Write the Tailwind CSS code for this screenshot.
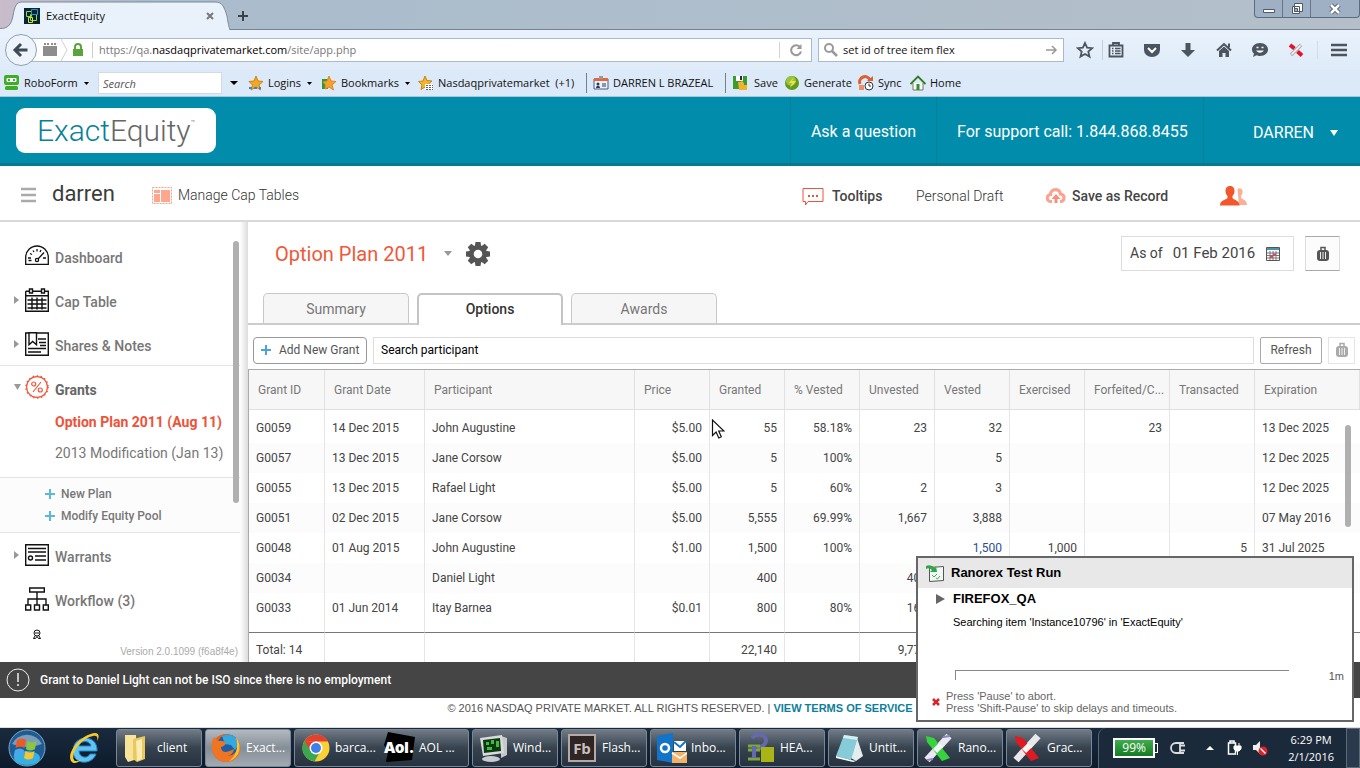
<!DOCTYPE html>
<html lang="en">
<head>
<meta charset="utf-8">
<title>ExactEquity</title>
<script src="https://cdn.jsdelivr.net/npm/@tailwindcss/browser@4"></script>
</head>
<body class="relative flex min-h-screen flex-col overflow-x-hidden bg-white font-['Roboto',sans-serif] text-[13px] text-[#555]">

<!-- Browser chrome -->
<div class="font-['Open_Sans',sans-serif] text-[11px] text-[#111]">
  <div class="flex h-[30px] items-start border-b border-[#76838f] bg-linear-to-r from-[#c9bccb] via-[#a9bccd] via-10% to-[#b4bfc9]">
    <div class="relative z-10 h-[30px] w-[230px]">
      <svg class="absolute inset-0 h-[30px] w-[230px]" viewBox="0 0 230 30"><path d="M0 30V28.500C8 28.500 11 25 13 16C14.500 7 16 2 22 2H215C222 2 224 6 227 16C228 24 229 28 230 30Z" fill="#e9f1fb"/><path d="M0 28.500C8 28.500 11 25 13 16C14.500 7 16 2 22 2H215C222 2 224 6 227 16C228 23 229 27 230 30" fill="none" stroke="#7e8a96"/></svg>
      <div class="relative flex h-[30px] items-center gap-1.5 pr-3 pl-6 pt-0.5">
        <svg class="size-4" viewBox="0 0 16 16"><path fill="#06243a" d="M0 0h16v16H0z"/><path d="M2.500 3.500h5v5h-5zM6.500 6.500h6v6h-6z" fill="none" stroke="#a5d62a"/><path d="M7.500 1.500h6v5h-6z" fill="none" stroke="#2f93b8"/><path d="M4.500 9.500h4v5h-4z" fill="none" stroke="#d8e82a"/></svg>
        <span class="flex-1 text-[11px]">ExactEquity</span>
        <button aria-label="Close tab"><svg class="size-4" viewBox="0 0 16 16"><path d="M5 5l6 6M11 5l-6 6" stroke="#777" stroke-width="2"/></svg></button>
      </div>
    </div>
    <button class="mt-1.5 ml-1 size-5" aria-label="New tab"><svg viewBox="0 0 20 20"><path d="M9 5v10M4 10h10" stroke="#38424c" stroke-width="2"/></svg></button>
    <div class="ml-auto flex h-[18px] divide-x divide-[#65758a] rounded-b border border-t-0 border-[#5c6c80] bg-[#9fb0c4]">
      <button class="w-7" aria-label="Minimize"><svg class="mx-auto h-4 w-4" viewBox="0 0 16 16"><path d="M2.500 8.500h11v3h-11z" fill="#fff" stroke="#4d5a6a"/></svg></button>
      <button class="w-7" aria-label="Restore"><svg class="mx-auto h-4 w-4" viewBox="0 0 16 16"><path d="M5.500 2.500h8v8h-8zM3.500 5.500h7v7h-7z" fill="#fff" stroke="#4d5a6a"/><path d="M5.500 7.500h3v3h-3z" fill="#9fb0c4" stroke="#4d5a6a"/></svg></button>
      <button class="w-12" aria-label="Close"><svg class="mx-auto h-4 w-4" viewBox="0 0 16 16"><path d="M4 4l8 8M12 4l-8 8" stroke="#4d5a6a" stroke-width="4.500"/><path d="M4 4l8 8M12 4l-8 8" stroke="#fff" stroke-width="2.500"/></svg></button>
    </div>
  </div>

  <div class="flex h-10 items-center bg-linear-to-b from-[#e9f2fc] to-[#dfebf9] pr-3 pl-[5px]">
    <button class="z-10 -mr-2 flex size-8 items-center justify-center rounded-full border border-[#8fa0b2] bg-[#eef4fb]" aria-label="Back"><svg class="size-5" viewBox="0 0 20 20"><path d="M10 4l-6 6 6 6M4 10h12.500" fill="none" stroke="#3f4a55" stroke-width="3"/></svg></button>
    <div class="flex h-6 flex-1 items-center border border-[#a9bacb] bg-white pl-3">
      <svg class="h-4 w-4" viewBox="0 0 16 16"><path fill="#8d8d8d" d="M1 4h14v10H1zM2 1h2v2H2zM5 1h2v2H5zM9 1h2v2H9zM12 1h2v2h-2z"/></svg>
      <svg class="ml-0.5 h-[22px] w-2" viewBox="0 0 8 22"><path d="M1 0l6 11-6 11" fill="none" stroke="#c9d1d9"/></svg>
      <svg class="ml-0.5 size-4" viewBox="0 0 16 16"><path fill="#58a53b" d="M3 7h10v7H3z"/><path d="M5 8V5a3 3 0 0 1 6 0v3" fill="none" stroke="#58a53b" stroke-width="2"/></svg>
      <span class="mx-1.5 h-4 border-l border-[#ccc]"></span>
      <span class="flex-1 text-[#777]">https://qa.<span class="text-black">nasdaqprivatemarket.com</span>/site/app.php</span>
      <button class="flex h-4 w-8 items-center justify-center border-l border-[#ccd5de]" aria-label="Reload"><svg class="size-4" viewBox="0 0 16 16"><path d="M12 5a5 5 0 1 0 1 4.500" fill="none" stroke="#999" stroke-width="2"/><path d="M13.500 2v5h-5z" fill="#999"/></svg></button>
    </div>
    <label class="ml-1.5 flex h-6 w-[246px] items-center border border-[#a9bacb] bg-white px-1">
      <svg class="mr-1 size-4" viewBox="0 0 16 16"><circle cx="6" cy="6" r="4" fill="none" stroke="#999" stroke-width="2"/><path d="M9 9l5 5" stroke="#999" stroke-width="2.500"/></svg>
      <input class="min-w-0 flex-1 outline-none" aria-label="Search" value="set id of tree item flex">
      <svg class="size-4" viewBox="0 0 16 16"><path d="M3 8h9M9 4l4 4-4 4" fill="none" stroke="#999" stroke-width="1.500"/></svg>
    </label>
    <div class="ml-3 flex items-center text-[#4a5560]">
      <button class="mr-2" aria-label="Bookmark"><svg class="size-[18px]" viewBox="0 0 18 18"><path d="M9 2l2.100 4.700 5.100.5-3.900 3.400 1.200 5L9 13l-4.500 2.600 1.200-5-3.900-3.400 5.100-.5z" fill="none" stroke="currentColor" stroke-width="1.800"/></svg></button>
      <span class="mr-1 h-5 border-l border-[#c3cfdb]"></span>
      <button class="mr-[18px]" aria-label="Reading list"><svg class="size-[18px]" viewBox="0 0 18 18"><path d="M2.500 4.500h13v11h-13zM6 4V2h6v2" fill="none" stroke="currentColor" stroke-width="1.800"/><path d="M5 7.500h1.500M8 7.500h5.500M5 10h1.500M8 10h5.500M5 12.500h1.500M8 12.500h5.500" stroke="currentColor" stroke-width="1.300"/></svg></button>
      <button class="mr-[18px]" aria-label="Pocket"><svg class="size-[18px]" viewBox="0 0 18 18"><path d="M1 3h16v6a8 7 0 0 1-16 0z" fill="currentColor"/><path d="M5 7l4 4 4-4" fill="none" stroke="#fff" stroke-width="2"/></svg></button>
      <button class="mr-[18px]" aria-label="Downloads"><svg class="size-[18px]" viewBox="0 0 18 18"><path d="M6.500 2h5v7H16l-7 7-7-7h4.500z" fill="currentColor"/></svg></button>
      <button class="mr-[18px]" aria-label="Home"><svg class="size-[18px]" viewBox="0 0 18 18"><path d="M2 9.500L9 3l7 6.500" fill="none" stroke="currentColor" stroke-width="2"/><path d="M4 10l5-4.500 5 4.500v6h-3.500v-4h-3v4H4zM13 2.500h2v4h-2z" fill="currentColor"/></svg></button>
      <button class="mr-[18px]" aria-label="Chat"><svg class="size-[18px]" viewBox="0 0 18 18"><path d="M9 2c5 0 8 3 8 6.500S14 15 9 15c-1.500 0-2.500 0-3.500-.7L2 16l1-3.500C1.500 11.500 1 10 1 8.500 1 5 4 2 9 2z" fill="currentColor"/><path d="M5 9.500q4 4.500 8 0z" fill="#fff"/><path d="M5.500 6.500h2M10.500 6.500h2" stroke="#fff" stroke-width="1.500"/></svg></button>
      <button class="mr-3" aria-label="Ranorex"><svg class="size-[18px]" viewBox="0 0 18 18"><path d="M14 4L4 14" stroke="#aaa" stroke-width="3.500"/><path d="M13.500 4.500l-9 9" stroke="#fff" stroke-width="1.500"/><path d="M3 4l4.500 3.500M10.500 10.500l4.500 4" stroke="#e2122b" stroke-width="4"/></svg></button>
      <button class="border-l border-[#d1dce8] pl-3" aria-label="Menu"><svg class="size-[18px]" viewBox="0 0 18 18"><path d="M1 4h16M1 9h16M1 14h16" stroke="currentColor" stroke-width="2.600"/></svg></button>
    </div>
  </div>

  <div class="flex h-[27px] items-center border-b border-[#a5c6da] bg-[#dce9f8] pl-1 whitespace-nowrap">
    <svg class="mr-1 size-4" viewBox="0 0 16 16"><rect x="0" y="0" width="15" height="10" rx="2" fill="#3fae24"/><rect x="2.500" y="3" width="10" height="4" rx="1" fill="#fff"/><path fill="#3fae24" d="M4 4h2v2H4zM9 4h2v2H9z"/><rect x="1" y="11" width="13" height="4" rx="1.500" fill="#3fae24"/></svg>
    <button class="flex w-[74px] items-center gap-1.5">RoboForm <svg class="h-[3px] w-[5px]" viewBox="0 0 5 3"><path d="M0 0h5L2.500 3z"/></svg></button>
    <input class="h-[22px] w-[124px] border border-[#d0dbe6] bg-white px-1 italic placeholder:text-[#555]" aria-label="RoboForm search" placeholder="Search">
    <button class="ml-2 w-[18px] text-left" aria-label="Search options"><svg class="h-2 w-2" viewBox="0 0 8 8"><path d="M0 2h8L4 6z"/></svg></button>
    <svg class="mr-1 size-4" viewBox="0 0 16 16"><path d="M8 1l2 5 5 .5-4 3.500 1.500 5L8 12l-5 3 1.500-5L1 6.500 6 6z" fill="#f5a623" stroke="#cf8412"/><path d="M1 13h12" stroke="#3d87c6" stroke-width="2" stroke-dasharray="3 2"/></svg>
    <button class="flex w-[53px] items-center gap-1.5">Logins <svg class="h-[3px] w-[5px]" viewBox="0 0 5 3"><path d="M0 0h5L2.500 3z"/></svg></button>
    <svg class="mr-1 size-4" viewBox="0 0 16 16"><path d="M1 4h6v10H1z" fill="#2d9a3b"/><path d="M8 1l2 5 5 .5-4 3.500 1.500 5L8 12l-4 2 .5-4L2 7l4-1z" fill="#f7a02b" stroke="#e08a1c"/></svg>
    <button class="flex w-[77px] items-center gap-1.5">Bookmarks <svg class="h-[3px] w-[5px]" viewBox="0 0 5 3"><path d="M0 0h5L2.500 3z"/></svg></button>
    <svg class="mr-1 size-4" viewBox="0 0 16 16"><path d="M7 1l2 4.500 5 .5-4 3.500 1.200 5L7 12l-4 2.500L4 10 0.500 6.500 5 6z" fill="#f5b32b" stroke="#c98416"/><path d="M7 9h8v6H7z" fill="#fff"/><path d="M8 10.500h7M8 12.500h7M8 14.500h7" stroke="#666" stroke-dasharray="2 1"/></svg>
    <button class="w-[148px] text-left">Nasdaqprivatemarket &nbsp;(+1)</button>
    <span class="mr-1.5 h-5 border-l border-[#73808d]"></span>
    <svg class="mr-1 size-4" viewBox="0 0 16 16"><path d="M1 4h14v10H1z" fill="#eef2f8" stroke="#4a5d80"/><path d="M1 3h14v3H1z" fill="#e2673d"/><path d="M6 1h4v3H6z" fill="#999"/><path d="M3 13c0-3 4-3 4 0z" fill="#223b66"/><circle cx="5" cy="9" r="1.500" fill="#223b66"/><path d="M9 9h4M9 11h4" stroke="#223b66"/></svg>
    <button class="w-[112px] text-left">DARREN L BRAZEAL</button>
    <span class="mr-1.5 h-5 border-l border-[#73808d]"></span>
    <svg class="mr-1.5 size-4" viewBox="0 0 16 16"><path d="M1 1h14v13H1z" fill="#3a9b2f"/><path d="M4 1h7v5H4z" fill="#fff"/><path d="M8 1h2v4H8z" fill="#234"/><path d="M6 7h3V5l3 3v2h3v5H7z" fill="#f0b12c"/></svg>
    <button class="w-[30px] text-left">Save</button>
    <svg class="mr-1 size-4" viewBox="0 0 16 16"><circle cx="8" cy="8" r="7" fill="#5d9a1d"/><circle cx="7" cy="6" r="5" fill="#99c443"/><path d="M10 2L5 8h3l-2 5 6-7H8z" fill="#ffe03a"/></svg>
    <button class="w-[54px] text-left">Generate</button>
    <svg class="mr-1 size-4" viewBox="0 0 16 16"><path d="M2 9a5 5 0 0 1 10-4" fill="none" stroke="#dd5f2d" stroke-width="3"/><path d="M9 6h6V1z" fill="#dd5f2d"/><path d="M1 10h5v5H1z" fill="#e98f6d"/><circle cx="11" cy="11" r="4" fill="#fff" stroke="#333"/><path d="M11 8.500V11h2" fill="none" stroke="#333"/></svg>
    <button class="w-8 text-left">Sync</button>
    <svg class="mr-1 size-4" viewBox="0 0 16 16"><path d="M3 8v7h10V8" fill="#f6fbef" stroke="#777"/><path d="M0.500 9L8 1.500 15.500 9" fill="none" stroke="#2f7a22" stroke-width="1.800"/><path d="M6.500 9h3v6h-3z" fill="#3c8a2c"/></svg>
    <button>Home</button>
  </div>
</div>

<!-- Product header -->
<header class="flex h-[69px] items-stretch border-b-3 border-[#08788f] bg-[#028cab] pl-4 text-[16px] text-white">
  <a href="#" class="mt-[11px] flex h-[45px] w-[200px] items-center justify-center rounded-[9px] bg-white text-[30px] font-light text-[#666]"><span class="text-[#058199]">Exact</span>Equity<sup class="-top-2 text-[7px]">™</sup></a>
  <nav class="ml-auto flex divide-x divide-[#057f9b] border-l border-[#057f9b]">
    <a href="#" class="flex w-[146px] items-center justify-center pt-1">Ask a question</a>
    <span class="flex w-[267px] items-center pt-1 pl-5">For support call: 1.844.868.8455</span>
    <button class="flex w-[156px] items-center justify-end gap-4 pt-1.5 pr-[22px]">DARREN <svg class="h-[6px] w-2" viewBox="0 0 8 6"><path d="M0 0h8L4 6z" fill="#fff"/></svg></button>
  </nav>
</header>

<div class="flex h-14 items-center border-b-2 border-[#d9d9d9] pl-5 text-[14px] text-[#555]">
  <button class="mt-1" aria-label="Menu"><svg class="h-4 w-4" viewBox="0 0 16 16"><path d="M1 2h15M1 8h15M1 14h15" stroke="#aaa" stroke-width="2.500"/></svg></button>
  <h1 class="ml-4 w-[100px] text-[22px] text-[#3c3c3c]">darren</h1>
  <a href="#" class="mt-1 flex items-center gap-1.5 font-light text-[#333]"><svg class="h-[17px] w-5" viewBox="0 0 20 17"><path d="M.5 .5h19v16H.5z" fill="none" stroke="#ff9f84" stroke-dasharray="2 1"/><path d="M2 3h6v3H2zM2 7h6v8H2zM9 3h9v12H9z" fill="#ffa78e"/></svg>Manage Cap Tables</a>
  <div class="ml-auto flex items-center pt-1.5">
    <button class="flex w-[114px] items-center gap-2 font-medium text-[#444]"><svg class="h-5 w-[22px]" viewBox="0 0 22 20"><path d="M1 2.500h20v13H6L3.500 19v-3.500H1z" fill="none" stroke="#e8553a"/><path d="M6 10h2M10 10h2M14 10h2" stroke="#e8553a" stroke-width="2"/></svg>Tooltips</button>
    <button class="w-[130px] text-left font-light text-[#333]">Personal Draft</button>
    <button class="flex w-[174px] items-center gap-1.5 font-medium text-[#444]"><svg class="h-5 w-5" viewBox="0 0 20 20"><path d="M6 15.500H5A3.500 3.500 0 0 1 4.500 8.500C4.500 2 14 2 14.500 8A3.800 3.800 0 0 1 15 15.500H14" fill="none" stroke="#fba391" stroke-width="3.200"/><path d="M10 8l4.500 5H11.500v4h-3v-4H5.500z" fill="#f6907b"/></svg>Save as Record</button>
    <button class="mr-28" aria-label="People"><svg class="h-5 w-7" viewBox="0 0 28 20"><path d="M17.500 3a3.500 4 0 0 1 4 0c2 2 1 5-.5 7v2c1.500 1.500 6 2 6 7h-8z" fill="#ffad96"/><path d="M10 0c3.500 0 4.500 2.500 4.500 5 0 2-1 4-2 5v2c1 2 7 2 7 7.500H0C0 14 6 14 7.500 12v-2c-1-1-2-3-2-5 0-2.500 1-5 4.500-5z" fill="#f2572b"/></svg></button>
  </div>
</div>

<div class="flex flex-1">
  <!-- Side navigation -->
  <aside class="relative flex w-[248px] flex-col bg-[linear-gradient(to_left,#dcdcdc,#fff_8px)] pt-3 pr-2 text-[14px] font-medium text-[#777]">
    <div class="absolute top-[19px] right-[9px] h-[262px] w-1.5 rounded-full bg-[#b0b0b0]"></div>
    <a href="#" class="flex h-11 items-center gap-1.5 pl-[25px]"><svg class="h-6 w-6" viewBox="0 0 24 24" fill="none" stroke="#111" stroke-width="1.300"><path d="M.7 20.300v-7a11.300 11.300 0 0 1 22.600 0v7zM3 14h3M3.500 16.500h3M18 14h3M5 9.500l2 1M8 6.500l1 1.500M12 5v2.500M16 6l-1 2"/><circle cx="12" cy="16" r="1.600"/><path d="M13 15l6-6.500"/></svg><span class="pt-1">Dashboard</span></a>
    <a href="#" class="flex h-11 items-center pl-[14px]"><svg class="mr-1.5 h-2 w-[5px]" viewBox="0 0 5 8"><path d="M0 0l5 4-5 4z" fill="#999"/></svg><svg class="mr-1.5 h-6 w-6" viewBox="0 0 24 24" fill="none" stroke="#111" stroke-width="1.400"><path d="M.7 3.200h3.500M8 3.200h8M20 3.200h3.300v20.100H.7V3.200M.7 7.700h22.600M4.500 1h3v4h-3zM16.500 1h3v4h-3zM7 9.500v12M12 9.500v12M17 9.500v12M2.500 12h19M2.500 16h19M2.500 20h19"/></svg><span class="pt-1">Cap Table</span></a>
    <a href="#" class="flex h-11 items-center pl-[14px]"><svg class="mr-1.5 h-2 w-[5px]" viewBox="0 0 5 8"><path d="M0 0l5 4-5 4z" fill="#999"/></svg><svg class="mr-1.5 h-6 w-6" viewBox="0 0 24 24" fill="none" stroke="#111" stroke-width="1.400"><path d="M4 1H.7v22.300h22.600V1H11M4 .7h7.500v12L7.700 9.500 4 12.700zM13 7h8M14 10.500h7M15 13.500h6M3 16.500h18M3 20h13"/></svg><span class="pt-1">Shares &amp; Notes</span></a>
    <div class="mt-[-1px] border-y border-[#e4e4e4]">
      <a href="#" class="flex h-[42px] items-center pl-[14px] font-bold text-[#666]"><svg class="mr-1 h-[6px] w-[7px]" viewBox="0 0 7 6"><path d="M0 0h7L3.500 6z" fill="#999"/></svg><svg class="mr-1.5 h-6 w-6" viewBox="0 0 24 24" fill="none" stroke="#f0553a" stroke-width="1.200"><circle cx="12" cy="12" r="10.400"/><circle cx="12" cy="12" r="11.200" stroke-dasharray="1.500 2.500"/><circle cx="8.700" cy="9" r="2"/><circle cx="15.300" cy="15" r="2"/><path d="M16 7l-8 10"/></svg><span class="pt-1.5">Grants</span></a>
      <a href="#" class="flex h-7 items-center pl-[55px] font-bold whitespace-nowrap text-[#ee5237]">Option Plan 2011 (Aug 11)</a>
      <a href="#" class="flex h-[41px] items-center pb-1.5 pl-[55px] font-normal whitespace-nowrap">2013 Modification (Jan 13)</a>
    </div>
    <div class="border-b border-[#e4e4e4] bg-[#fcfcfc] py-[5px] text-[12px]">
      <a href="#" class="flex h-[22px] items-center gap-1.5 pl-[45px]"><svg class="size-2.5" viewBox="0 0 10 10"><path d="M5 0v10M0 5h10" stroke="#59b9d6" stroke-width="2"/></svg>New Plan</a>
      <a href="#" class="flex h-[22px] items-center gap-1.5 pl-[45px]"><svg class="size-2.5" viewBox="0 0 10 10"><path d="M5 0v10M0 5h10" stroke="#59b9d6" stroke-width="2"/></svg>Modify Equity Pool</a>
    </div>
    <a href="#" class="flex h-11 items-center pl-[14px]"><svg class="mr-1.5 h-2 w-[5px]" viewBox="0 0 5 8"><path d="M0 0l5 4-5 4z" fill="#999"/></svg><svg class="mr-1.5 h-6 w-6" viewBox="0 0 24 24" fill="none" stroke="#111" stroke-width="1.400"><path d="M.7 1.700h22.600v20.600H.7zM3 5.500h18M3 9h18M10 13h11M10 17h11"/><circle cx="5.500" cy="15" r="2"/></svg><span class="pt-1">Warrants</span></a>
    <a href="#" class="flex h-11 items-center gap-1.5 pl-[25px]"><svg class="h-6 w-6" viewBox="0 0 24 24" fill="none" stroke="#111" stroke-width="1.400"><path d="M4.700 1h14.600v4H4.700zM12 5v13M3 18v-6h18v6M.7 18h5v5h-5zM9.500 18h5v5h-5zM18.300 18h5v5h-5z"/></svg><span class="pt-1">Workflow (3)</span></a>
    <svg class="mt-2 ml-8 h-2.5 w-2.5" viewBox="0 0 10 10" fill="none" stroke="#111"><circle cx="5" cy="4" r="3"/><path d="M3 4h4M3 7L1.500 9.500h2L5 7.500l1.500 2h2L7 7"/></svg>
    <p class="mt-auto pr-0.5 pb-[3px] text-right font-['Liberation_Sans',sans-serif] text-[10px] font-normal whitespace-nowrap text-[#aaa]">Version 2.0.1099 (f6a8f4e)</p>
  </aside>

  <main class="flex min-w-0 flex-1 flex-col">
    <div class="flex h-[71px] items-center pr-5 pb-2 pl-[27px]">
      <button class="flex items-center gap-4 text-[20px] text-[#f0583a]">Option Plan 2011 <svg class="h-[5px] w-2" viewBox="0 0 8 5"><path d="M0 0h8L4 5z" fill="#999"/></svg></button>
      <button class="ml-[14px]" aria-label="Settings"><svg class="size-6" viewBox="0 0 24 24"><g fill="#555"><circle cx="12" cy="12" r="9"/><path d="M9.500 0h5l.8 5h-6.600zM9.500 24h5l.8-5h-6.600z"/><path d="M9.500 0h5l.8 5h-6.600zM9.500 24h5l.8-5h-6.600z" transform="rotate(45 12 12)"/><path d="M9.500 0h5l.8 5h-6.600zM9.500 24h5l.8-5h-6.600z" transform="rotate(90 12 12)"/><path d="M9.500 0h5l.8 5h-6.600zM9.500 24h5l.8-5h-6.600z" transform="rotate(135 12 12)"/></g><circle cx="12" cy="12" r="4.300" fill="#fff"/></svg></button>
      <label class="ml-auto flex h-[35px] w-[173px] items-center border border-[#ddd] pl-2 text-[14px] text-[#444]">As of
        <input class="ml-2.5 w-[93px] text-[15px] outline-none" value="01 Feb 2016">
        <svg class="size-[14px]" viewBox="0 0 14 14"><path d="M.5 .5h13v13H.5z" fill="#fff" stroke="#555"/><path d="M1 1h12v2H1z" fill="#4d90b0"/><path d="M1 6h12M1 8.500h12M1 11h12M4 4v9M7 4v9M10 4v9" stroke="#777"/><path d="M7 6.500h3v2H7zM4 9h3v2H4z" fill="#d9485a"/></svg>
      </label>
      <button class="ml-[11px] flex h-[35px] w-[35px] items-center justify-center border border-x-[#ddd] border-y-[#aaa] bg-[#fcfcfc]" aria-label="Luggage"><svg class="h-4 w-4" viewBox="0 0 16 16"><path d="M6 4V1.500h4V4" fill="none" stroke="#555" stroke-width="1.500"/><rect x="2" y="4" width="12" height="11" rx="3" fill="#555"/><path d="M5.500 6v7M8 6v7M10.500 6v7" stroke="#eee"/></svg></button>
    </div>

    <div class="flex items-end gap-2 border-b-2 border-[#ccc] pl-[15px] text-[14px] text-[#777]" role="tablist">
      <button role="tab" class="h-[30px] w-[146px] rounded-t-[5px] border border-b-0 border-[#c8c8c8] bg-[#f6f6f6] pt-px">Summary</button>
      <button role="tab" aria-selected="true" class="-mb-0.5 h-8 w-[146px] rounded-t-[5px] border-2 border-b-0 border-[#c4c4c4] bg-white pb-0.5 font-medium text-[#333]">Options</button>
      <button role="tab" class="h-[30px] w-[146px] rounded-t-[5px] border border-b-0 border-[#c8c8c8] bg-[#f6f6f6] pt-px">Awards</button>
    </div>

    <div class="flex h-11 items-center gap-1.5 pt-1.5 pr-[5px] pl-[5px]">
      <button class="flex h-[27px] w-[114px] items-center gap-2 rounded border border-[#999] pl-[7px] text-[12px] whitespace-nowrap text-[#555]"><svg class="size-2.5" viewBox="0 0 10 10"><path d="M5 0v10M0 5h10" stroke="#4aa3df" stroke-width="2"/></svg>Add New Grant</button>
      <input class="h-[27px] flex-1 border border-[#ddd] px-[7px] text-[12px] text-black placeholder:text-black" aria-label="Search participant" placeholder="Search participant">
      <button class="h-[27px] w-[62px] rounded-xs border border-[#aaa] text-[12px] text-[#555]">Refresh</button>
      <button class="flex h-[27px] w-[27px] items-center justify-center border border-[#e5e5e5]" aria-label="Luggage"><svg class="h-4 w-4" viewBox="0 0 16 16"><path d="M6 4V1.500h4V4" fill="none" stroke="#aaa" stroke-width="1.500"/><rect x="2" y="4" width="12" height="11" rx="3" fill="#aaa"/><path d="M5.500 6v7M8 6v7M10.500 6v7" stroke="#eee"/></svg></button>
    </div>

    <div class="relative border-t border-l border-[#aaa]">
      <table class="w-full table-fixed border-separate border-spacing-0 text-[12px] whitespace-nowrap text-[#444] [&_td]:border-r [&_td]:border-[#e6e6e6] [&_td]:px-[7px] [&_td]:py-0 [&_td:nth-child(n+4):nth-child(-n+11)]:text-right [&_td:nth-child(12)]:border-r-0 [&_tfoot_td]:border-t [&_tfoot_td]:border-t-[#777] [&_tfoot_td]:pt-1 [&_th]:overflow-hidden [&_th]:border-r [&_th]:border-b [&_th]:border-[#e0e0e0] [&_th]:bg-[#f7f7f7] [&_th]:pl-[9px] [&_th]:text-left [&_th]:font-normal [&_th]:text-[#777]">
        <colgroup><col class="w-[76px]"><col class="w-[100px]"><col><col class="w-[75px]"><col class="w-[75px]"><col class="w-[75px]"><col class="w-[75px]"><col class="w-[75px]"><col class="w-[75px]"><col class="w-[85px]"><col class="w-[85px]"><col class="w-[105px]"></colgroup>
        <thead><tr class="h-10"><th>Grant ID</th><th>Grant Date</th><th>Participant</th><th>Price</th><th>Granted</th><th>% Vested</th><th>Unvested</th><th>Vested</th><th>Exercised</th><th>Forfeited/C...</th><th>Transacted</th><th>Expiration</th></tr></thead>
        <tbody>
          <tr class="h-[3px]" aria-hidden="true"><td></td><td></td><td></td><td></td><td></td><td></td><td></td><td></td><td></td><td></td><td></td><td></td></tr>
          <tr class="h-[30px]"><td>G0059</td><td>14 Dec 2015</td><td>John Augustine</td><td>$5.00</td><td>55</td><td>58.18%</td><td>23</td><td>32</td><td></td><td>23</td><td></td><td>13 Dec 2025</td></tr>
          <tr class="h-[30px] bg-[#fcfcfc]"><td>G0057</td><td>13 Dec 2015</td><td>Jane Corsow</td><td>$5.00</td><td>5</td><td>100%</td><td></td><td>5</td><td></td><td></td><td></td><td>12 Dec 2025</td></tr>
          <tr class="h-[30px]"><td>G0055</td><td>13 Dec 2015</td><td>Rafael Light</td><td>$5.00</td><td>5</td><td>60%</td><td>2</td><td>3</td><td></td><td></td><td></td><td>12 Dec 2025</td></tr>
          <tr class="h-[30px] bg-[#fcfcfc]"><td>G0051</td><td>02 Dec 2015</td><td>Jane Corsow</td><td>$5.00</td><td>5,555</td><td>69.99%</td><td>1,667</td><td>3,888</td><td></td><td></td><td></td><td>07 May 2016</td></tr>
          <tr class="h-[30px]"><td>G0048</td><td>01 Aug 2015</td><td>John Augustine</td><td>$1.00</td><td>1,500</td><td>100%</td><td></td><td class="text-[#2a4f8f]">1,500</td><td>1,000</td><td></td><td>5</td><td>31 Jul 2025</td></tr>
          <tr class="h-[30px] bg-[#fcfcfc]"><td>G0034</td><td></td><td>Daniel Light</td><td></td><td>400</td><td></td><td>400</td><td></td><td></td><td></td><td></td><td></td></tr>
          <tr class="h-[30px]"><td>G0033</td><td>01 Jun 2014</td><td>Itay Barnea</td><td>$0.01</td><td>800</td><td>80%</td><td>160</td><td></td><td></td><td></td><td></td><td></td></tr>
          <tr class="h-[9px]" aria-hidden="true"><td></td><td></td><td></td><td></td><td></td><td></td><td></td><td></td><td></td><td></td><td></td><td></td></tr>
        </tbody>
        <tfoot><tr class="h-[30px]"><td>Total: 14</td><td></td><td></td><td></td><td>22,140</td><td></td><td>9,773</td><td></td><td></td><td></td><td></td><td></td></tr></tfoot>
      </table>
      <div class="absolute top-[55px] right-[9px] h-[102px] w-1.5 rounded-full bg-[#b0b0b0]"></div>
    </div>
  </main>
</div>

<div class="flex h-9 items-center gap-2.5 bg-[#454545] pl-1.5 text-[12px] font-medium text-white" role="status">
  <svg class="size-6" viewBox="0 0 24 24" fill="none" stroke="#eee"><circle cx="12" cy="12" r="11"/><path d="M12 5v9M12 16v2" stroke-width="1.500"/></svg>
  Grant to Daniel Light can not be ISO since there is no employment
</div>
<footer class="flex h-[30px] justify-center border-b border-[#ddd] pt-0.5 font-['Liberation_Sans',sans-serif] text-[11px] whitespace-pre text-[#555]">© 2016 NASDAQ PRIVATE MARKET. ALL RIGHTS RESERVED. | <a href="#" class="font-bold text-[#0e7f9b]">VIEW TERMS OF SERVICE</a></footer>

<!-- Taskbar -->
<div class="flex h-10 items-stretch bg-linear-to-b from-[#1a2a3d] to-[#0d1b2c] font-['Open_Sans',sans-serif] text-[12px] whitespace-nowrap text-white">
  <button class="ml-2 w-[38px]" aria-label="Start"><svg class="size-[38px]" viewBox="0 0 38 38"><circle cx="19" cy="19" r="18" fill="#1d5d94" stroke="#7fa7c7"/><ellipse cx="19" cy="29" rx="13" ry="7" fill="#35b1e6"/><path d="M4 15a16 14 0 0 1 30 0q-15 6-30 0z" fill="#7b9db8"/><path d="M9 11q5-3 9 0l-1.500 8q-4-3-9 0z" fill="#ee5a24"/><path d="M19.500 12q4 3 9 0L27 20q-5 3-9 0z" fill="#8cc63e"/><path d="M7 21q5-3 9 0l-1.500 7q-4-3-9 0z" fill="#4aa8e8"/><path d="M17.500 22q4 3 9 0L25 29q-5 3-9 0z" fill="#fbc52d"/></svg></button>
  <button class="ml-[22px] w-8" aria-label="Internet Explorer"><svg class="h-9 w-8" viewBox="0 0 32 36"><path d="M29 21H11c0 7 9 8 11 3h6c-4 12-24 11-23-4C6 4 30 4 29 21zM11 16h12c-1-6-11-6-12 0z" fill="#5ec5f3" stroke="#2384c6"/><path d="M3 31C-2 22 14 4 27 3c5 0 4 5 2 8 1-4 0-6-4-5C14 8 2 23 6 30c1 2 5 1 8-1-5 5-9 5-11 2z" fill="#f9c92b"/></svg></button>
  <div class="ml-4 flex items-center gap-[3px] [&>button]:flex [&>button]:h-[38px] [&>button]:w-[86px] [&>button]:items-center [&>button]:gap-1 [&>button]:rounded-[3px] [&>button]:border [&>button]:border-[#7b8794] [&>button]:pl-1">
    <button class="bg-linear-to-b from-[#717b86] via-[#36434f] to-[#26323f]"><svg class="size-8" viewBox="0 0 32 32"><path d="M4 3h11l1 24-9 3-3-5z" fill="#f7e39a"/><path d="M12 7l12-3v23l-8 3-4-3z" fill="#e9c95e"/><path d="M15 9l6-2v20l-5 2z" fill="#f9ebb2"/></svg>client</button>
    <button class="bg-linear-to-b from-[#b4bac1] via-[#858d96] to-[#a3aab2]"><svg class="size-8" viewBox="0 0 32 32"><circle cx="16" cy="16" r="14" fill="#e8641c"/><circle cx="18" cy="13" r="10.500" fill="#1b5fa6"/><path d="M12 4q8-4 14 2 4 6-1 12l-4-5-6-1z" fill="#35a8de"/><path d="M4 5l4 4q5-1 8 2-1 3-5 4 0 5 5 5 5-1 8-3-1 6-7 7 10 1 12-13 3 8-1 13-5 6-13 6C4 29-2 16 4 5z" fill="#ef7423"/><path d="M26 5q6 8 2 17-4 6-9 7 11-8 7-24z" fill="#fbc52d"/></svg>Exact...</button>
    <span class="flex h-[38px] w-[175px] items-center rounded-[3px] border border-[#7b8794] bg-linear-to-b from-[#717b86] via-[#36434f] to-[#26323f] pl-1">
      <button class="flex w-[84px] items-center gap-1"><svg class="size-8" viewBox="0 0 32 32"><circle cx="17" cy="16" r="13.500" fill="#fbd034"/><path d="M5.500 9A13.500 13.500 0 0 1 29 9.500H17z" fill="#e3402f"/><path d="M5.500 9a13.500 13.500 0 0 0 10 20.500l5-9L12 18z" fill="#3aa851"/><path d="M5.500 9L12 20l5-10.500z" fill="#e3402f"/><circle cx="17" cy="16" r="6.500" fill="#fff"/><circle cx="17" cy="16" r="5" fill="#3f7fe8"/></svg>barca...</button>
      <button class="relative flex items-center gap-1"><svg class="absolute inset-0 h-8 w-8" viewBox="0 0 32 32"><path d="M5 0l27 5-3 23-26 2 2-10-4-7z"/></svg><span class="relative w-8 text-center font-['Inter',sans-serif] text-[15px] leading-8 font-black">Aol.</span>AOL ...</button>
    </span>
    <button class="bg-linear-to-b from-[#717b86] via-[#36434f] to-[#26323f]"><svg class="size-8" viewBox="0 0 32 32"><path d="M24 4l6 2v17l-6 3z" fill="#c6c9cc"/><path d="M3 6l22-3 2 18-21 3z" fill="#d8dadc"/><path d="M6 8l17-2 1 13-17 2z" fill="#0c3a10"/><path d="M9 10h3v3H9zM14 8h3v4h-3zM19 9h3v6h-3zM10 15h5v3h-5z" fill="#45b747"/><ellipse cx="14" cy="27" rx="9" ry="3" fill="#c9cccf"/></svg>Wind...</button>
    <button class="bg-linear-to-b from-[#717b86] via-[#36434f] to-[#26323f]"><span class="ml-0.5 flex size-7 items-center justify-center border-2 border-[#b5a8a5] bg-[#2e2524] text-[15px] font-bold text-[#c8bfbc]">Fb</span><span class="pl-0.5">Flash...</span></button>
    <button class="bg-linear-to-b from-[#717b86] via-[#36434f] to-[#26323f]"><svg class="size-8" viewBox="0 0 32 32"><path d="M2 4l16-3v30L2 28z" fill="#1174c9"/><circle cx="10" cy="16" r="4" fill="none" stroke="#fff" stroke-width="2.500"/><path d="M19 9h12v10H19z" fill="#fff"/><path d="M19 10l6 5 6-6" fill="none" stroke="#1174c9" stroke-width="2"/><path d="M17 20h15v11H17z" fill="#f2b26a"/><path d="M17 21l8 5 7-5" fill="none" stroke="#fff" stroke-width="1.500"/></svg>Inbo...</button>
    <button class="bg-linear-to-b from-[#717b86] via-[#36434f] to-[#26323f]"><svg class="size-8" viewBox="0 0 32 32"><path d="M8 6q4-5 10-3 7 4 2 10-5 2-6 5" fill="none" stroke="#6568ad" stroke-width="4"/><path d="M4 14h12M4 18h12M4 27h12" stroke="#7ca63e" stroke-width="3"/><path d="M10 14v12" stroke="#6568ad" stroke-width="4"/><path d="M17 15h13v15H17z" fill="#a9b514"/></svg>HEA...</button>
    <button class="bg-linear-to-b from-[#717b86] via-[#36434f] to-[#26323f]"><svg class="size-8" viewBox="0 0 32 32"><path d="M24 6l6 18-7 5-5-3z" fill="#e4ecee"/><path d="M11 3l14 2-7 23-15-4z" fill="#85cbd8"/><path d="M11 3l14 2-1 3-14-2z" fill="#d5eef2"/><path d="M3 24l15 4 5 1-3 1-17-4z" fill="#fff"/></svg>Untit...</button>
    <button class="bg-linear-to-b from-[#717b86] via-[#36434f] to-[#26323f]"><svg class="size-8" viewBox="0 0 32 32"><path d="M27 4L5 28" stroke="#e9e9f4" stroke-width="7"/><path d="M5 28l6-1M21 5l7-1" stroke="#8c82bd" stroke-width="2"/><path d="M4 4l8 2 16 20-8 3L5 10z" fill="#35d43d"/><path d="M19 13l-6 6" stroke="#f5f5fa" stroke-width="6"/></svg>Rano...</button>
    <button class="bg-linear-to-b from-[#717b86] via-[#36434f] to-[#26323f]"><svg class="size-8" viewBox="0 0 32 32"><path d="M27 4L5 28" stroke="#e9e9ec" stroke-width="7"/><path d="M4 4l8 2 16 20-8 3L5 10z" fill="#dd1b20"/><path d="M19 13l-6 6" stroke="#f5f5f5" stroke-width="6"/></svg>Grac...</button>
  </div>
  <div class="ml-auto flex items-center rounded-tl-lg border-l border-[#5a6877] bg-[#1b2a3b] pl-[14px]">
    <span class="flex h-5 w-[42px] items-center justify-center border-2 border-white bg-linear-to-b from-[#3fae4d] to-[#157a25] text-[12px]">99%</span><span class="h-2.5 w-[3px] border border-l-0 border-white"></span>
    <svg class="ml-[10px] h-4 w-5" viewBox="0 0 20 16"><path d="M16 3H8a5 5 0 0 0 0 10h8M12 3v10M12 5.500h5M12 10.500h5" fill="none" stroke="#ddd" stroke-width="1.800"/></svg>
    <svg class="ml-[18px] h-2 w-2" viewBox="0 0 8 8"><path d="M0 6l4-4 4 4z" fill="#fff"/></svg>
    <svg class="ml-3 h-4 w-4" viewBox="0 0 16 16"><path d="M2.500 3h7v11h-7zM4 1h4v2H4z" fill="#1b2a3b" stroke="#fff" stroke-width="1.500"/><path d="M8 6h7v3l-2 2h-3L8 9zM9.500 3v3M13 3v3M11.500 11v4" fill="#fff" stroke="#fff"/></svg>
    <svg class="ml-2.5 h-4 w-4" viewBox="0 0 16 16"><path d="M1 5h3l4-4v13l-4-4H1z" fill="#eee"/><circle cx="11" cy="11" r="4.500" fill="#d7252b"/><path d="M8.500 8.500l5 5" stroke="#fff" stroke-width="1.300"/></svg>
    <div class="ml-5 pr-3 text-center text-[11px] leading-[17px]">6:29 PM<br>2/1/2016</div>
    <button class="h-10 w-[14px] border border-[#5d6a78] bg-[#2a3a4c]" aria-label="Show desktop"></button>
  </div>
</div>

<!-- Test runner notification -->
<section class="absolute right-1.5 bottom-[46px] flex h-[166px] w-[438px] flex-col border-2 border-[#666] bg-white font-['Liberation_Sans',sans-serif] text-[11px] text-black">
  <h2 class="flex h-[30px] items-center gap-1.5 bg-[#e8e8e8] pl-2 text-[13px] font-bold"><svg class="size-[19px]" viewBox="0 0 19 19"><path d="M3.500 3.500l14-1v14l-14 1z" fill="#f4f8f4" stroke="#555"/><path d="M0 2q5-2 9 2l1-2 1 6H4l2-2Q3 3 0 5z" fill="#2fa648"/><path d="M6 11l2 2 3-3M10 14l1.500 1 2.500-3" fill="none" stroke="#3fae55"/></svg>Ranorex Test Run</h2>
  <div class="flex h-[22px] items-center gap-2 pl-[18px] text-[13px] font-bold"><svg class="h-3 w-[9px]" viewBox="0 0 9 12"><path d="M0 1l9 5-9 5z" fill="#666"/></svg>FIREFOX_QA</div>
  <p class="pt-1 pl-[35px]">Searching item 'Instance10796' in 'ExactEquity'</p>
  <div class="mt-auto flex h-3.5 items-start pr-2 pl-[37px]"><span class="h-2.5 w-[334px] border-t border-l border-[#888]"></span><span class="ml-auto leading-3 text-[#555]">1m</span></div>
  <div class="flex h-9 items-center gap-1.5 pl-[14px] leading-3 text-[#666]"><svg class="h-2 w-2" viewBox="0 0 8 8"><path d="M1 1l6 6M7 1L1 7" stroke="#d9232b" stroke-width="2.500"/></svg><p>Press 'Pause' to abort.<br>Press 'Shift-Pause' to skip delays and timeouts.</p></div>
</section>

<!-- Mouse pointer -->
<svg class="absolute top-[419px] left-[711px] h-5 w-3.5" viewBox="0 0 14 20"><path d="M1.500 1v15.500l3.600-3.500 2.700 6 2.500-1.200L7.700 12H13z" fill="#fff" stroke="#111" stroke-width="1.200"/></svg>
</body>
</html>
